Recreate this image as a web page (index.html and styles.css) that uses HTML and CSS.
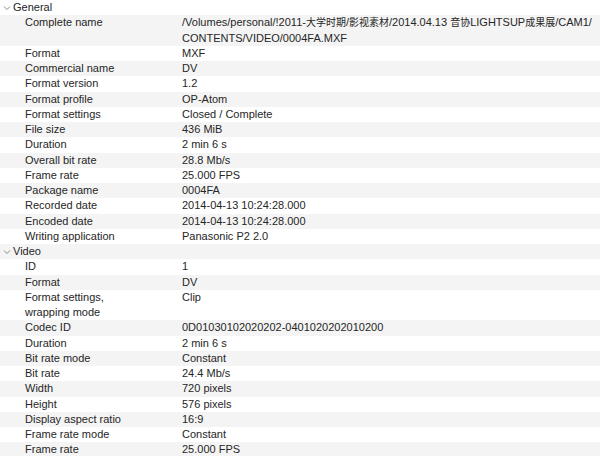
FILE: index.html
```html
<!DOCTYPE html>
<html lang="en">
<head>
<meta charset="utf-8">
<title>Media info</title>
<link rel="stylesheet" href="styles.css">
</head>
<body>
<div class="outline">
  <div class="group"><svg class="chev" width="8" height="6" viewBox="0 0 8 6"><polyline points="1,1.5 4,4.5 7,1.5"/></svg><span>General</span></div>
  <div class="row"><span class="k">Complete name</span><span class="v">/Volumes/personal/!2011-<span class="cjk">大学时期</span>/<span class="cjk">影视素材</span>/2014.04.13 <span class="cjk">音协</span>LIGHTSUP<span class="cjk">成果展</span>/CAM1/<br>CONTENTS/VIDEO/0004FA.MXF</span></div>
  <div class="row"><span class="k">Format</span><span class="v">MXF</span></div>
  <div class="row"><span class="k">Commercial name</span><span class="v">DV</span></div>
  <div class="row"><span class="k">Format version</span><span class="v">1.2</span></div>
  <div class="row"><span class="k">Format profile</span><span class="v">OP-Atom</span></div>
  <div class="row"><span class="k">Format settings</span><span class="v">Closed / Complete</span></div>
  <div class="row"><span class="k">File size</span><span class="v">436 MiB</span></div>
  <div class="row"><span class="k">Duration</span><span class="v">2 min 6 s</span></div>
  <div class="row"><span class="k">Overall bit rate</span><span class="v">28.8 Mb/s</span></div>
  <div class="row"><span class="k">Frame rate</span><span class="v">25.000 FPS</span></div>
  <div class="row"><span class="k">Package name</span><span class="v">0004FA</span></div>
  <div class="row"><span class="k">Recorded date</span><span class="v">2014-04-13 10:24:28.000</span></div>
  <div class="row"><span class="k">Encoded date</span><span class="v">2014-04-13 10:24:28.000</span></div>
  <div class="row"><span class="k">Writing application</span><span class="v">Panasonic P2 2.0</span></div>
  <div class="group"><svg class="chev" width="8" height="6" viewBox="0 0 8 6"><polyline points="1,1.5 4,4.5 7,1.5"/></svg><span>Video</span></div>
  <div class="row"><span class="k">ID</span><span class="v">1</span></div>
  <div class="row"><span class="k">Format</span><span class="v">DV</span></div>
  <div class="row"><span class="k">Format settings,<br>wrapping mode</span><span class="v">Clip</span></div>
  <div class="row"><span class="k">Codec ID</span><span class="v">0D01030102020202-0401020202010200</span></div>
  <div class="row"><span class="k">Duration</span><span class="v">2 min 6 s</span></div>
  <div class="row"><span class="k">Bit rate mode</span><span class="v">Constant</span></div>
  <div class="row"><span class="k">Bit rate</span><span class="v">24.4 Mb/s</span></div>
  <div class="row"><span class="k">Width</span><span class="v">720 pixels</span></div>
  <div class="row"><span class="k">Height</span><span class="v">576 pixels</span></div>
  <div class="row"><span class="k">Display aspect ratio</span><span class="v">16:9</span></div>
  <div class="row"><span class="k">Frame rate mode</span><span class="v">Constant</span></div>
  <div class="row"><span class="k">Frame rate</span><span class="v">25.000 FPS</span></div>
</div>
</body>
</html>
```
FILE: styles.css
```css
html, body {
  margin: 0;
  padding: 0;
  background: #ffffff;
}
body {
  font-family: "Liberation Sans", Arial, "Noto Sans CJK SC", sans-serif;
  font-size: 11px;
  color: #262626;
  overflow: hidden;
}
.outline {
  display: flex;
  flex-direction: column;
}
.outline > :nth-child(even) {
  background: #f4f4f4;
}
.group {
  display: flex;
  align-items: center;
  line-height: 15.25px;
  padding-left: 3px;
  gap: 2px;
}
.chev {
  fill: none;
  stroke: #8a8a8a;
  stroke-width: 1;
}
.row {
  display: grid;
  grid-template-columns: 157px 1fr;
  padding-left: 25px;
  line-height: 15.25px;
}
.v {
  white-space: nowrap;
}
.cjk {
  font-family: "Noto Sans CJK SC", sans-serif;
  font-size: 10px;
  line-height: 1;
}
```
